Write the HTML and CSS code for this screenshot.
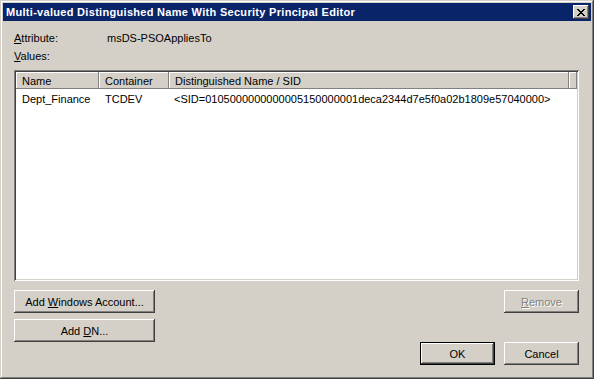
FILE: index.html
```html
<!DOCTYPE html>
<html lang="en">
<head>
<meta charset="UTF-8" />
<title>Multi-valued Distinguished Name With Security Principal Editor</title>
<link rel="stylesheet" href="styles.css">
</head>
<body>
<div class="window">
  <div class="titlebar">
    <span class="title">Multi-valued Distinguished Name With Security Principal Editor</span>
    <button class="close-btn" aria-label="Close">
      <svg width="8" height="7" viewBox="0 0 8 7" shape-rendering="crispEdges">
        <path d="M0 0h2v1h-2zM6 0h2v1h-2zM1 1h2v1h-2zM5 1h2v1h-2zM2 2h4v1h-4zM3 3h2v1h-2zM2 4h4v1h-4zM1 5h2v1h-2zM5 5h2v1h-2zM0 6h2v1h-2zM6 6h2v1h-2z" fill="#000"/>
      </svg>
    </button>
  </div>

  <div class="content">
    <div class="attr-row">
      <span class="attr-label"><u>A</u>ttribute:</span>
      <span class="attr-value">msDS-PSOAppliesTo</span>
    </div>
    <div class="values-label"><u>V</u>alues:</div>

    <div class="listbox">
      <table class="list">
        <thead>
          <tr>
            <th class="col-name">Name</th>
            <th class="col-container">Container</th>
            <th class="col-dn">Distinguished Name / SID</th>
            <th class="col-fill"></th>
          </tr>
        </thead>
        <tbody>
          <tr>
            <td class="col-name">Dept_Finance</td>
            <td class="col-container">TCDEV</td>
            <td class="col-dn">&lt;SID=0105000000000005150000001deca2344d7e5f0a02b1809e57040000&gt;</td>
            <td class="col-fill"></td>
          </tr>
        </tbody>
      </table>
    </div>

    <div class="btn-row first">
      <button class="btn wide">Add <u>W</u>indows Account...</button>
      <button class="btn" disabled><u>R</u>emove</button>
    </div>
    <div class="btn-row second">
      <button class="btn wide">Add <u>D</u>N...</button>
    </div>
    <div class="btn-row dialog">
      <button class="btn default">OK</button>
      <button class="btn">Cancel</button>
    </div>
  </div>
</div>
</body>
</html>
```

FILE: styles.css
```css
body {
  margin: 0;
  padding: 0;
  background: #d4d0c8;
  font-family: 'Liberation Sans', Arial, sans-serif;
  font-size: 11px;
  color: #000;
}
.window {
  width: 594px;
  height: 379px;
  box-sizing: border-box;
  background: #d4d0c8;
  padding: 3px 3px 0 3px;
  box-shadow:
    inset -1px -1px #404040,
    inset 1px 1px #d4d0c8,
    inset -2px -2px #808080,
    inset 2px 2px #fff;
}
.titlebar {
  height: 18px;
  background: #0a246a;
  display: flex;
  align-items: center;
  justify-content: space-between;
  padding: 0 2px 0 2px;
}
.title {
  color: #fff;
  font-weight: bold;
  font-size: 11px;
  letter-spacing: 0.3px;
  padding-left: 1px;
  line-height: 18px;
}
.close-btn {
  width: 16px;
  height: 14px;
  padding: 0;
  border: none;
  background: #d4d0c8;
  display: flex;
  align-items: center;
  justify-content: center;
  box-shadow:
    inset -1px -1px #404040,
    inset 1px 1px #fff,
    inset -2px -2px #808080;
}
.content {
  padding: 11px 12px 0 11px;
}
.attr-row {
  display: flex;
  line-height: 13px;
}
.attr-label {
  width: 93px;
}
.values-label {
  margin-top: 5px;
  line-height: 13px;
}
u {
  text-decoration: underline;
  text-underline-offset: 1px;
}
.listbox {
  margin-top: 7px;
  height: 211px;
  box-sizing: border-box;
  background: #fff;
  padding: 2px;
  box-shadow:
    inset 1px 1px #808080,
    inset -1px -1px #fff,
    inset 2px 2px #404040,
    inset -2px -2px #d4d0c8;
}
.list {
  width: 100%;
  border-collapse: collapse;
  table-layout: fixed;
}
.list th {
  height: 17px;
  box-sizing: border-box;
  padding: 2px 0 0 6px;
  background: #d4d0c8;
  font-weight: normal;
  text-align: left;
  line-height: 13px;
  box-shadow:
    inset -1px -1px #808080,
    inset 1px 1px #fff;
}
.list td {
  height: 17px;
  padding: 4px 0 0 6px;
  line-height: 13px;
  white-space: nowrap;
  vertical-align: top;
}
.col-name { width: 83px; }
.col-container { width: 70px; }
.col-dn { width: 400px; }
.list td.col-dn { padding-left: 5px; }
.btn-row {
  display: flex;
  justify-content: space-between;
}
.btn-row.first { margin-top: 9px; }
.btn-row.second { margin-top: 6px; }
.btn-row.dialog {
  justify-content: flex-end;
  gap: 9px;
}
.btn {
  width: 75px;
  height: 23px;
  padding: 0;
  border: none;
  background: #d4d0c8;
  font-family: inherit;
  font-size: 11px;
  color: #000;
  box-shadow:
    inset -1px -1px #404040,
    inset 1px 1px #fff,
    inset -2px -2px #808080,
    inset 2px 2px #d4d0c8;
}
.btn.wide { width: 141px; }
.btn:disabled {
  color: #808080;
  text-shadow: 1px 1px #fff;
}
.btn.default {
  box-shadow:
    inset 0 0 0 1px #000,
    inset -2px -2px #404040,
    inset 2px 2px #fff,
    inset -3px -3px #808080;
}
```
